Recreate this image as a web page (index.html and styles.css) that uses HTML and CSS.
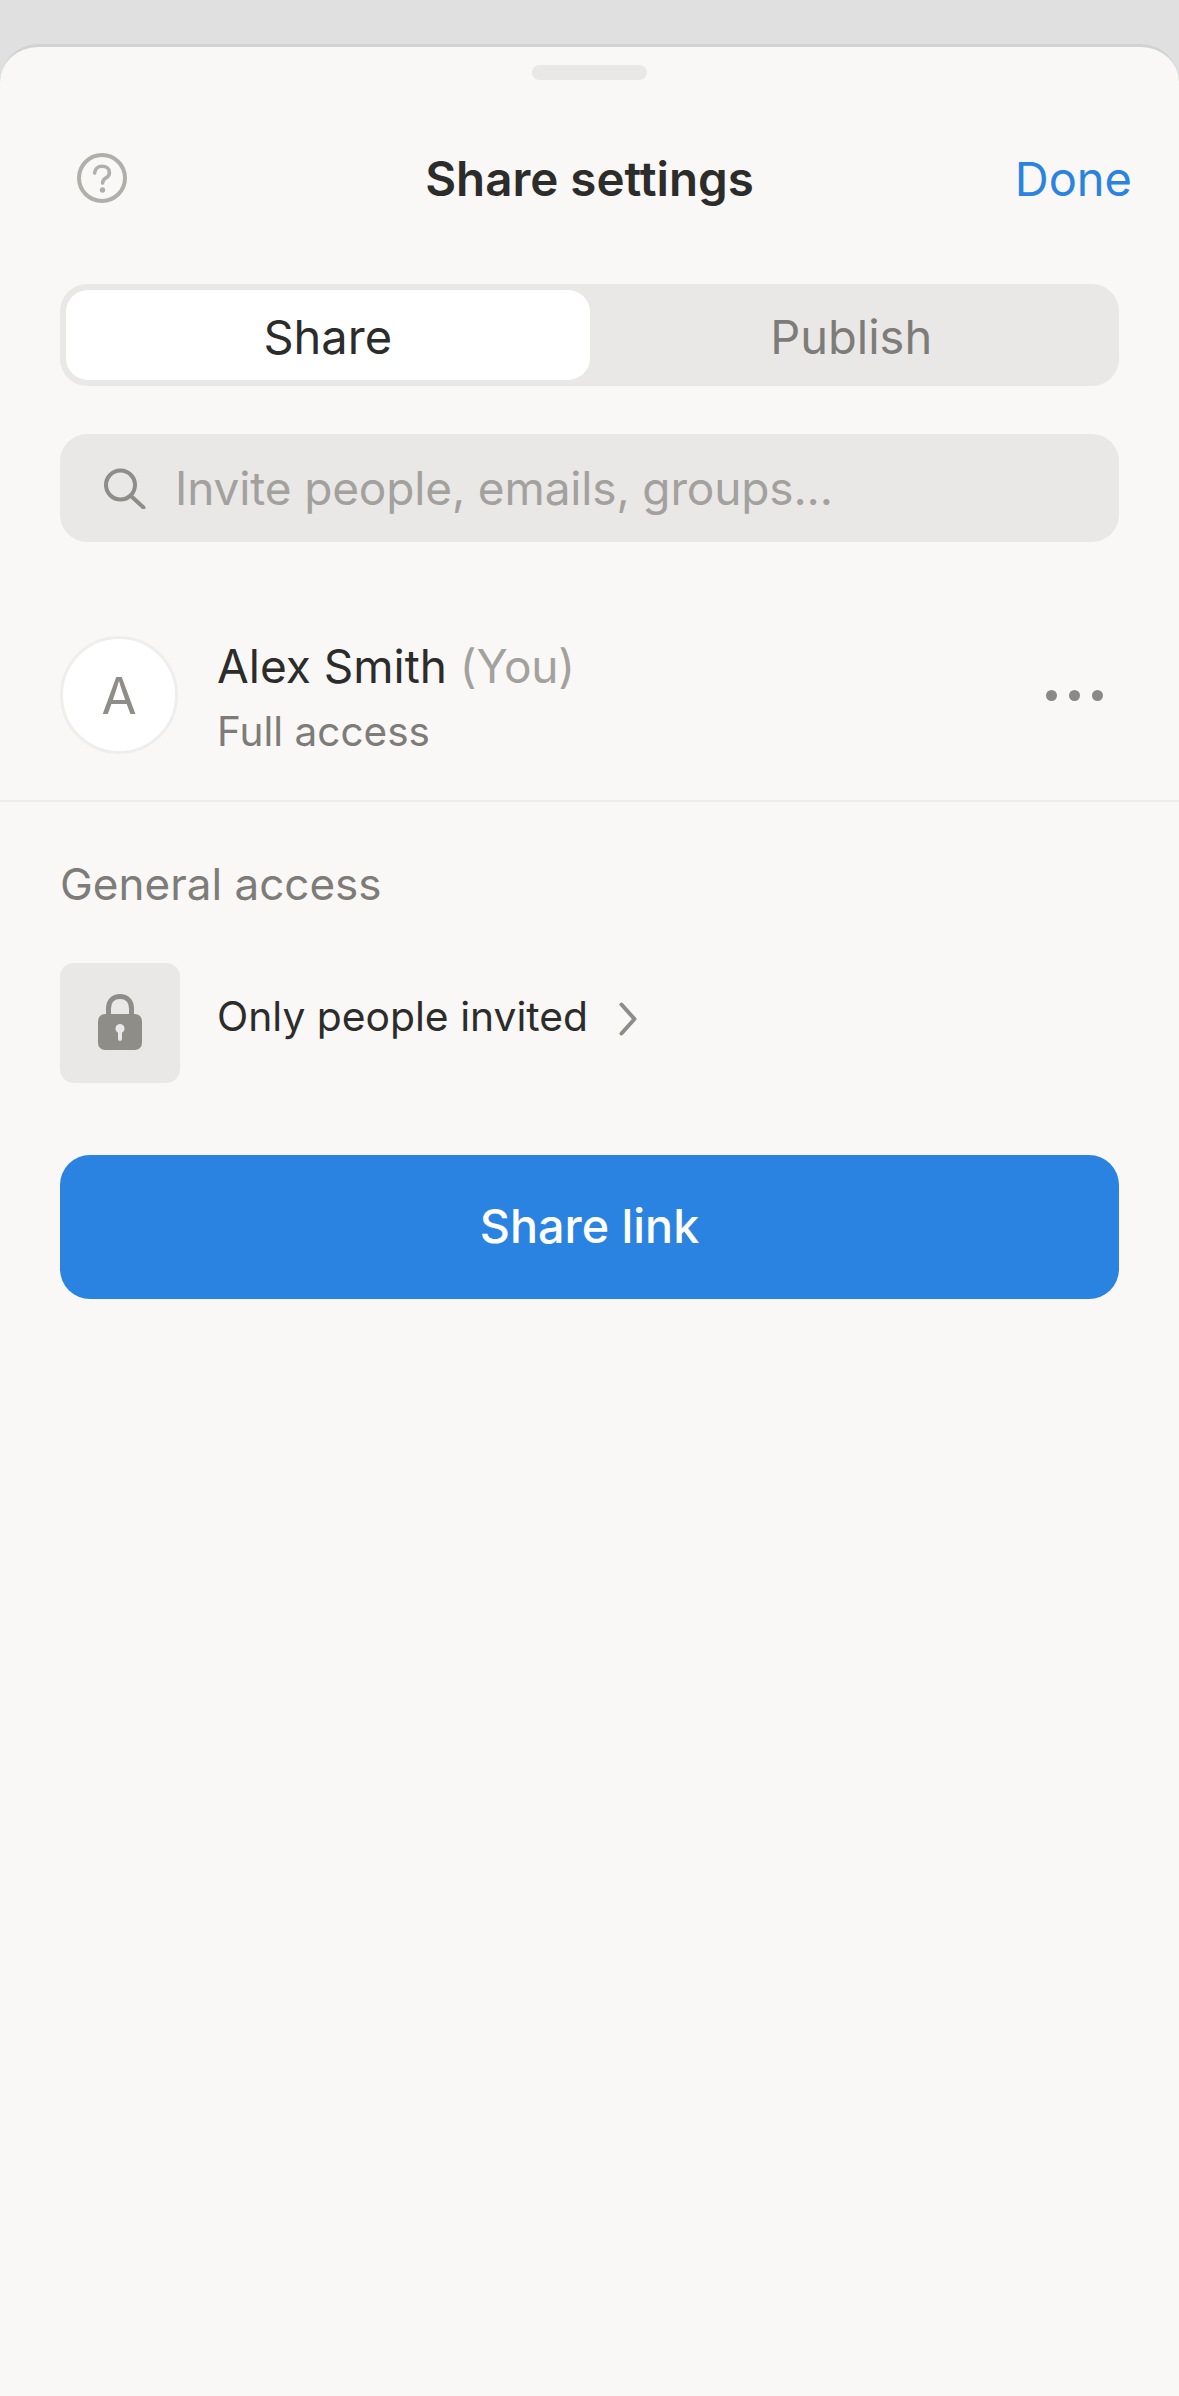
FILE: index.html
```html
<!DOCTYPE html>
<html lang="en">
<head>
<meta charset="utf-8">
<title>Share settings</title>
<link rel="stylesheet" href="styles.css">
</head>
<body>
<main class="sheet">
  <div class="handle"></div>
  <header class="header">
    <svg class="help" viewBox="0 0 50 50" fill="none" aria-hidden="true">
      <circle cx="25" cy="25" r="23" stroke="#b0afab" stroke-width="4"/>
      <path d="M17.6 20c.3-4.300 3.400-6.800 7.500-6.800 4.200 0 7.300 2.500 7.300 6.200 0 2.800-1.500 4.300-3.600 5.700-2.200 1.400-3.200 2.500-3.200 5" stroke="#b0afab" stroke-width="3.600" stroke-linecap="round"/>
      <circle cx="25.500" cy="37" r="2.700" fill="#b0afab"/>
    </svg>
    <h1 class="title">Share settings</h1>
    <span class="done">Done</span>
  </header>
  <div class="tabs">
    <div class="tab tab-active">Share</div>
    <div class="tab">Publish</div>
  </div>
  <div class="search">
    <svg class="search-icon" viewBox="0 0 43 41" fill="none" aria-hidden="true">
      <circle cx="17.500" cy="17" r="14.500" stroke="#8f8d88" stroke-width="4"/>
      <path d="M28 28l12.500 11.500" stroke="#8f8d88" stroke-width="4" stroke-linecap="round"/>
    </svg>
    <span class="placeholder">Invite people, emails, groups...</span>
  </div>
  <section class="person">
    <div class="avatar">A</div>
    <div class="person-text">
      <div class="name">Alex Smith <span class="you">(You)</span></div>
      <div class="role">Full access</div>
    </div>
    <div class="dots"><i></i><i></i><i></i></div>
  </section>
  <section class="general">
    <h2 class="general-title">General access</h2>
    <div class="access">
      <div class="lock-tile">
        <svg class="lock" viewBox="0 0 44 56" aria-hidden="true">
          <path d="M10.500 24V14.500C10.500 7 15 2.500 22 2.500S33.500 7 33.500 14.500V24" fill="none" stroke="#8f8d88" stroke-width="5"/>
          <path fill="#8f8d88" fill-rule="evenodd" d="M7 20h30a7 7 0 0 1 7 7v22a7 7 0 0 1-7 7H7a7 7 0 0 1-7-7V27a7 7 0 0 1 7-7zm15 10a4.600 4.600 0 0 0-2 8.700V45a2 2 0 0 0 4 0v-6.300A4.600 4.600 0 0 0 22 30z"/>
        </svg>
      </div>
      <span class="access-label">Only people invited</span>
      <svg class="chevron" viewBox="0 0 18 34" fill="none" aria-hidden="true">
        <path d="M2.500 2.500L15.500 17L2.500 31.500" stroke="#8f8d88" stroke-width="4" stroke-linecap="round" stroke-linejoin="round"/>
      </svg>
    </div>
  </section>
  <div class="share-btn">Share link</div>
</main>
</body>
</html>
```
FILE: styles.css
```css
* { box-sizing: border-box; }
html, body { margin: 0; height: 100%; }
body {
  background: #e0e0e0;
  padding-top: 44px;
  font-family: Inter, "Liberation Sans", sans-serif;
  overflow: hidden;
}
.sheet {
  height: 2352px;
  background: #f9f8f6;
  border-top: 3px solid #d2d2d1;
  border-radius: 38px 38px 0 0;
}
.handle {
  width: 115px;
  height: 15px;
  margin: 18px auto 0;
  background: #e9e8e6;
  border-radius: 8px;
}
.header {
  position: relative;
  display: flex;
  align-items: center;
  justify-content: space-between;
  height: 100px;
  margin-top: 48px;
  padding: 0 47px 0 77px;
}
.help { width: 50px; height: 50px; }
.title {
  position: absolute;
  left: 0;
  right: 0;
  top: 1px;
  margin: 0;
  line-height: 100px;
  text-align: center;
  font-size: 47.500px;
  font-weight: 600;
  color: #2c2c2b;
}
.done { font-size: 47px; line-height: 100px; padding-top: 2px; color: #2a83e0; }
.tabs {
  display: flex;
  height: 102px;
  margin: 56px 60px 0;
  padding: 6px;
  background: #e9e8e6;
  border-radius: 27px;
}
.tab {
  flex: 1;
  display: flex;
  align-items: center;
  justify-content: center;
  padding-top: 3px;
  font-size: 47px;
  color: #7d7c78;
  border-radius: 22px;
}
.tab-active { background: #fff; color: #2c2c2b; }
.search {
  display: flex;
  align-items: center;
  height: 108px;
  margin: 48px 60px 0;
  padding-left: 43px;
  background: #e9e8e6;
  border-radius: 27px;
}
.search-icon { width: 43px; height: 41px; margin-right: 29px; }
.placeholder { font-size: 46px; letter-spacing: -0.15px; color: #a3a19d; }
.person {
  display: flex;
  align-items: center;
  margin-top: 94px;
  padding: 0 76px 46px 60px;
  border-bottom: 2px solid #edecea;
}
.avatar {
  display: flex;
  align-items: center;
  justify-content: center;
  flex: none;
  width: 118px;
  height: 118px;
  background: #fff;
  border: 3px solid #efeeec;
  border-radius: 50%;
  font-size: 51px;
  color: #8f8d88;
}
.person-text { flex: 1; margin-left: 39px; }
.name { font-size: 46px; line-height: 54px; padding-top: 3px; color: #2c2c2b; }
.you { color: #a3a19d; letter-spacing: -0.2px; }
.role { font-size: 40.500px; line-height: 44px; margin-top: 17px; color: #7d7c78; }
.dots { display: flex; gap: 12px; }
.dots i { width: 11px; height: 11px; border-radius: 50%; background: #8a8985; }
.general { padding: 0 60px; }
.general-title {
  margin: 56px 0 0;
  font-size: 44px;
  line-height: 52px;
  font-weight: 400;
  color: #7d7c78;
}
.access { display: flex; align-items: flex-start; margin-top: 53px; }
.lock-tile {
  display: flex;
  align-items: center;
  justify-content: center;
  padding-bottom: 2px;
  width: 120px;
  height: 120px;
  background: #e9e8e6;
  border-radius: 14px;
}
.lock { width: 44px; height: 56px; }
.access-label {
  margin: 29px 0 0 37px;
  font-size: 40.800px;
  line-height: 48px;
  color: #2c2c2b;
}
.chevron { width: 18px; height: 34px; margin: 39px 0 0 31px; }
.share-btn {
  display: flex;
  align-items: center;
  justify-content: center;
  height: 144px;
  margin: 72px 60px 0;
  padding-bottom: 2px;
  background: #2a83e0;
  border-radius: 30px;
  font-size: 46.700px;
  font-weight: 500;
  color: #fff;
}
```
